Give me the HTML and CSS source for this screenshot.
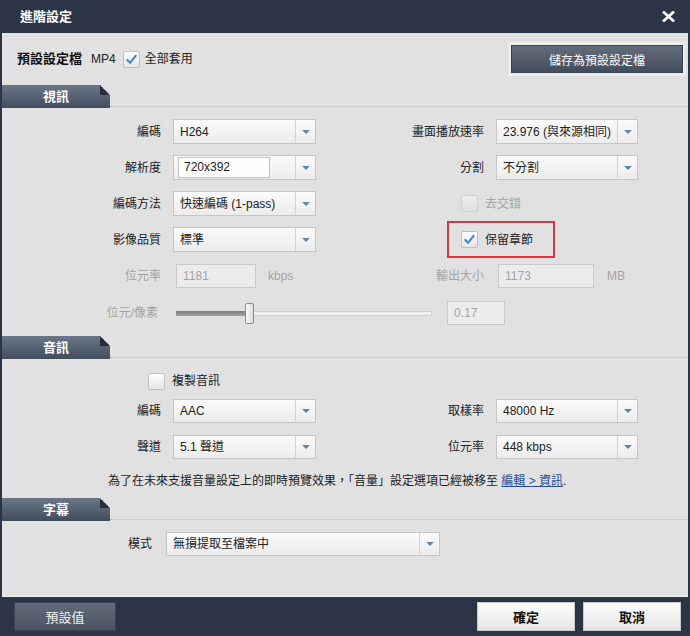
FILE: index.html
```html
<!DOCTYPE html>
<html lang="zh-Hant">
<head>
<meta charset="utf-8">
<title>進階設定</title>
<link rel="stylesheet" href="styles.css">
</head>
<body>
<div class="window">
  <div class="titlebar">
    <span class="title">進階設定</span>
    <svg class="close" width="13" height="11" viewBox="0 0 13 11"><path d="M2 1.5 L11 9.5 M11 1.5 L2 9.5" stroke="#fff" stroke-width="2.8" stroke-linecap="square"/></svg>
  </div>

  <div class="content">
    <div class="toprow">
      <div class="profile">
        <b class="plabel">預設設定檔</b>
        <span class="pval">MP4</span>
        <span class="cb"><svg viewBox="0 0 16 16"><path d="M3.5 8.5 L6.5 11.5 L12.5 4" /></svg></span>
        <span>全部套用</span>
      </div>
      <button class="save">儲存為預設設定檔</button>
    </div>

    <div class="sec sec-video"><div class="tab">視訊</div><div class="rule"></div></div>

    <div class="grid video">
      <span class="lbl">編碼</span>
      <div class="select"><span class="val">H264</span><span class="arr"></span></div>
      <span class="lbl">畫面播放速率</span>
      <div class="select"><span class="val">23.976 (與來源相同)</span><span class="arr"></span></div>

      <span class="lbl">解析度</span>
      <div class="select"><span class="val"><span class="inner">720x392</span></span><span class="arr"></span></div>
      <span class="lbl">分割</span>
      <div class="select"><span class="val">不分割</span><span class="arr"></span></div>

      <span class="lbl">編碼方法</span>
      <div class="select"><span class="val">快速編碼 (1-pass)</span><span class="arr"></span></div>
      <div class="chk disabled"><span class="cb"></span><span>去交錯</span></div>

      <span class="lbl">影像品質</span>
      <div class="select"><span class="val">標準</span><span class="arr"></span></div>
      <div class="chk"><span class="mark"></span><span class="cb"><svg viewBox="0 0 16 16"><path d="M3.5 8.5 L6.5 11.5 L12.5 4" /></svg></span><span>保留章節</span></div>
    </div>

    <div class="grid rate">
      <span class="lbl dim">位元率</span>
      <div class="fieldwrap"><span class="field">1181</span><span class="unit">kbps</span></div>
      <span class="lbl dim">輸出大小</span>
      <div class="fieldwrap right"><span class="field wide">1173</span><span class="unit">MB</span></div>
    </div>

    <div class="sliderrow">
      <span class="lbl dim slbl">位元/像素</span>
      <div class="slider"><span class="fill"></span><span class="thumb"></span></div>
      <span class="field small">0.17</span>
    </div>

    <div class="sec sec-audio"><div class="tab">音訊</div><div class="rule"></div></div>

    <div class="copyrow"><span class="cb"></span><span>複製音訊</span></div>

    <div class="grid audio">
      <span class="lbl">編碼</span>
      <div class="select"><span class="val">AAC</span><span class="arr"></span></div>
      <span class="lbl">取樣率</span>
      <div class="select"><span class="val">48000 Hz</span><span class="arr"></span></div>

      <span class="lbl">聲道</span>
      <div class="select"><span class="val">5.1 聲道</span><span class="arr"></span></div>
      <span class="lbl">位元率</span>
      <div class="select"><span class="val">448 kbps</span><span class="arr"></span></div>
    </div>

    <p class="note">為了在未來支援音量設定上的即時預覽效果，「音量」設定選項已經被移至 <a href="#">編輯 &gt; 資訊</a>.</p>

    <div class="sec sec-sub"><div class="tab">字幕</div><div class="rule"></div></div>

    <div class="moderow">
      <span class="lbl mlbl">模式</span>
      <div class="select mode"><span class="val">無損提取至檔案中</span><span class="arr"></span></div>
    </div>
  </div>

  <div class="footer">
    <button class="fbtn dark">預設值</button>
    <div class="fright">
      <button class="fbtn light">確定</button>
      <button class="fbtn light">取消</button>
    </div>
  </div>
</div>
</body>
</html>
```

FILE: styles.css
```css
* { box-sizing: border-box; }

html, body {
  margin: 0;
  padding: 0;
  background: #2b3545;
}

body {
  font-family: "Liberation Sans", "Noto Sans CJK TC", sans-serif;
  font-size: 12px;
  color: #222;
}

.window {
  width: 690px;
  height: 636px;
  background: #2b3545;
  display: flex;
  flex-direction: column;
}

/* title bar */
.titlebar {
  height: 33px;
  flex: none;
  display: flex;
  align-items: center;
  justify-content: space-between;
  padding: 0 15px 0 20px;
}

.title {
  color: #fff;
  font-weight: bold;
  font-size: 13px;
  line-height: 16px;
}

.close { display: block; }

/* content */
.content {
  flex: 1;
  margin: 0 2px;
  background: #e1e1e1;
  border-bottom: 1px solid #f1f1f1;
  display: flex;
  flex-direction: column;
}

.toprow {
  margin-top: 12px;
  height: 28px;
  display: flex;
  align-items: center;
  justify-content: space-between;
  padding: 0 5px 0 15px;
}

.profile {
  display: flex;
  align-items: center;
  line-height: 16px;
}

.plabel {
  font-size: 13px;
  font-weight: bold;
  color: #111;
}

.pval { margin-left: 9px; margin-right: 7px; }
.profile .cb { margin-right: 5px; }

.save {
  width: 172px;
  height: 28px;
  border: 1px solid #3a4352;
  background: linear-gradient(#646d7b, #434c5b);
  color: #fff;
  font-family: inherit;
  font-size: 12px;
  padding: 0;
  box-shadow: 0 0 0 3px #ececec;
  cursor: pointer;
}

/* section headers */
.sec {
  display: flex;
  height: 23px;
  flex: none;
}

.sec-video { margin-top: 12px; }
.sec-audio { margin-top: 11px; }
.sec-sub { margin-top: 9px; }

.tab {
  position: relative;
  width: 108px;
  height: 23px;
  background: linear-gradient(#6b7686, #414c5d);
  color: #fff;
  font-weight: bold;
  font-size: 13px;
  line-height: 23px;
  text-align: center;
  clip-path: polygon(0 0, calc(100% - 10px) 0, 100% 10px, 100% 100%, 0 100%);
}

.tab::after {
  content: "";
  position: absolute;
  top: 0;
  right: 0;
  width: 10px;
  height: 10px;
  background: linear-gradient(to bottom left, transparent 50%, #262e3b 50%);
}

.rule {
  flex: 1;
  border-bottom: 1px dotted #b9b9b9;
  margin-bottom: 1px;
}

/* grids */
.grid {
  display: grid;
  grid-template-columns: 171px 143px 180px 142px;
  align-items: center;
}

.video {
  margin-top: 11px;
  grid-auto-rows: 25px;
  row-gap: 11px;
}

.audio {
  margin-top: 6px;
  grid-auto-rows: 24px;
  row-gap: 12px;
}

.lbl {
  text-align: right;
  padding-right: 12px;
  line-height: 16px;
  color: #222;
}

.dim { color: #a3a3a3; }

/* select */
.select {
  display: flex;
  height: 100%;
  border: 1px solid #c6c6c6;
  background: linear-gradient(#fbfbfb, #ececec);
  align-items: stretch;
}

.select .val {
  flex: 1;
  display: flex;
  align-items: center;
  padding-left: 6px;
  line-height: 16px;
  white-space: nowrap;
  overflow: hidden;
  color: #222;
}

.select .arr {
  width: 20px;
  flex: none;
  border-left: 1px solid #d2d2d2;
  display: flex;
  align-items: center;
  justify-content: center;
}

.select .arr::before {
  content: "";
  width: 0;
  height: 0;
  border-left: 4px solid transparent;
  border-right: 4px solid transparent;
  border-top: 4px solid #5f87a8;
}

.select .inner {
  display: block;
  width: 92px;
  height: 21px;
  margin-left: -2px;
  padding-left: 5px;
  line-height: 19px;
  border: 1px solid #c3c3c3;
  background: #fdfdfd;
}

/* checkboxes */
.cb {
  width: 17px;
  height: 17px;
  flex: none;
  border: 1px solid #bfbfbf;
  border-radius: 2px;
  background: linear-gradient(#fdfdfd, #e6e6e6);
  display: inline-flex;
  align-items: center;
  justify-content: center;
}

.cb svg {
  width: 15px;
  height: 15px;
}

.cb svg path {
  fill: none;
  stroke: #4d86c2;
  stroke-width: 2.2;
  stroke-linecap: round;
  stroke-linejoin: round;
}

.chk {
  grid-column: 3 / 5;
  position: relative;
  display: flex;
  align-items: center;
  padding-left: 145px;
  line-height: 16px;
}

.chk .cb { margin-right: 7px; }

.chk.disabled { color: #a5a5a5; }
.chk.disabled .cb { border-color: #d0d0d0; background: linear-gradient(#ececec, #e2e2e2); }

.chk .mark {
  position: absolute;
  left: 131px;
  top: -10px;
  width: 108px;
  height: 37px;
  border: 2px solid #d8373f;
}

/* rate row */
.rate {
  margin-top: 12px;
  height: 24px;
}

.fieldwrap {
  display: flex;
  align-items: center;
  grid-column: auto;
}

.fieldwrap .field { margin-left: 3px; }
.fieldwrap.right .field { margin-left: 2px; }

.field {
  display: flex;
  align-items: center;
  width: 80px;
  height: 24px;
  padding-left: 6px;
  border: 1px solid #c9c9c9;
  background: #ececec;
  color: #a3a3a3;
  line-height: 16px;
  flex: none;
}

.field.wide { width: 96px; }
.field.small { width: 58px; }

.unit {
  margin-left: 12px;
  color: #a3a3a3;
  line-height: 16px;
}

.fieldwrap.right .unit { margin-left: 13px; }

/* slider row */
.sliderrow {
  margin-top: 13px;
  height: 24px;
  display: flex;
  align-items: center;
}

.slbl {
  width: 171px;
  padding-right: 15px;
}

.slider {
  position: relative;
  margin-left: 3px;
  width: 256px;
  height: 5px;
  border: 1px solid #cfcfcf;
  background: #f2f2f2;
}

.slider .fill {
  position: absolute;
  left: -1px;
  top: -1px;
  width: 72px;
  height: 5px;
  background: linear-gradient(#7d7d7d, #a3a3a3);
}

.slider .thumb {
  position: absolute;
  left: 68px;
  top: -9px;
  width: 9px;
  height: 21px;
  border: 1px solid #8c8c8c;
  border-radius: 2px;
  background: linear-gradient(to right, #fafafa, #dcdcdc);
}

.sliderrow .field { margin-left: 15px; }

/* audio */
.copyrow {
  margin-top: 10px;
  height: 24px;
  display: flex;
  align-items: center;
  padding-left: 146px;
  line-height: 16px;
}

.copyrow .cb { margin-right: 7px; }

.note {
  margin: 14px 0 0;
  padding-left: 106px;
  line-height: 16px;
  height: 16px;
}

.note a {
  color: #1d4f9c;
  text-decoration: underline;
}

/* subtitle */
.moderow {
  margin-top: 11px;
  height: 24px;
  display: flex;
  align-items: center;
}

.mlbl {
  width: 164px;
  padding-right: 14px;
}

.select.mode {
  width: 274px;
}

/* footer */
.footer {
  height: 39px;
  flex: none;
  display: flex;
  align-items: center;
  justify-content: space-between;
  padding: 0 9px 0 14px;
}

.fright {
  display: flex;
  gap: 8px;
}

.fbtn {
  height: 29px;
  width: 98px;
  padding: 0;
  font-family: inherit;
  font-size: 13px;
  cursor: pointer;
}

.fbtn.dark {
  width: 102px;
  border: 1px solid #3b4453;
  background: linear-gradient(#636c7a, #4a5362);
  color: #f2f2f2;
}

.fbtn.light {
  border: 1px solid #c9c9c9;
  background: linear-gradient(#ffffff, #e4e4e4);
  color: #111;
  font-weight: bold;
}
```
